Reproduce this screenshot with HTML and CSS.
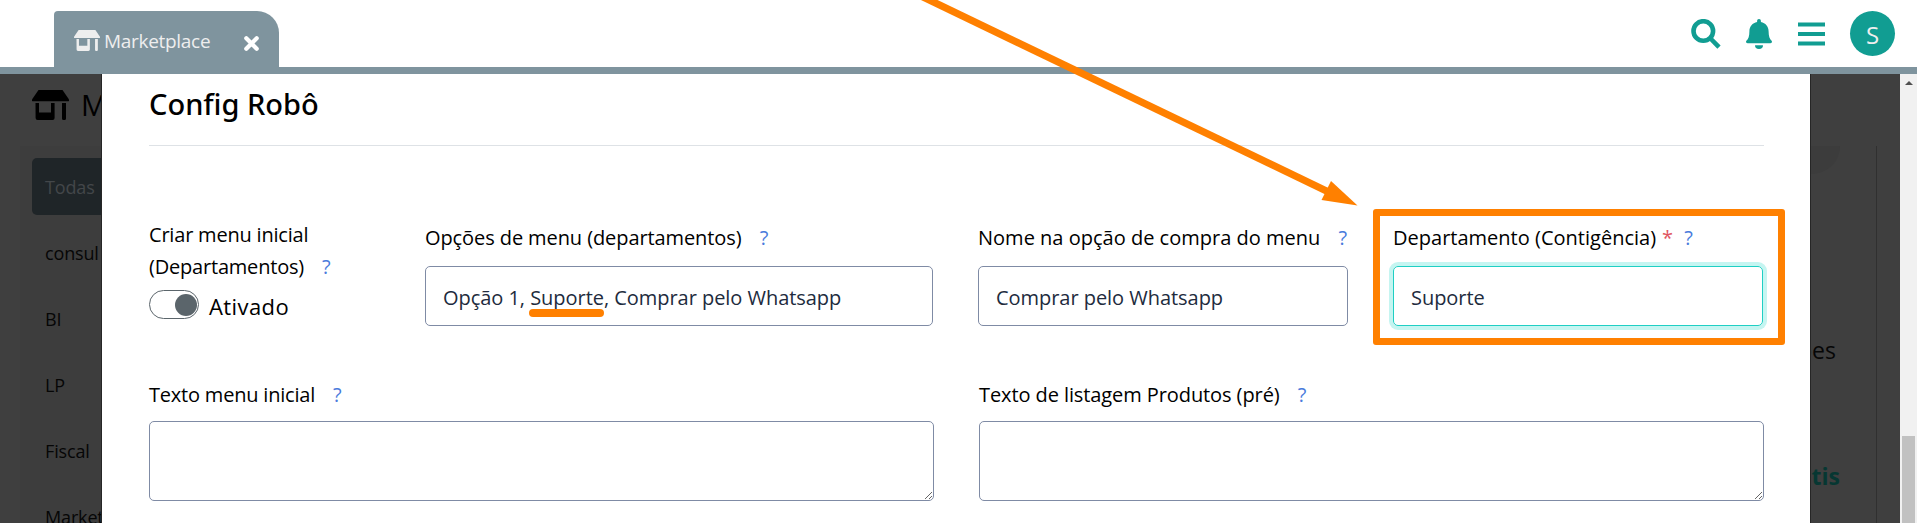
FILE: index.html
```
<!DOCTYPE html>
<html lang="pt-BR">
<head>
<meta charset="utf-8">
<title>Marketplace</title>
<link rel="stylesheet" href="styles.css">
</head>
<body>
<svg width="0" height="0" class="defs" aria-hidden="true">
  <symbol id="store" viewBox="0 0 37 30">
    <path d="M6.5 0h24L37 9.5a1.2 1.2 0 0 1-1 1.800H1A1.200 1.200 0 0 1 0 9.500z"/>
    <path d="M3.500 13H7v9.500h12V13h3.600v15a2 2 0 0 1-2 2h-15a2 2 0 0 1-2-2zM30 13h4v15.500a1.500 1.500 0 0 1-1.500 1.500H31.500a1.500 1.500 0 0 1-1.500-1.500z"/>
  </symbol>
</svg>

<header class="topbar">
  <div class="tab">
    <svg class="tab-icon"><use href="#store"/></svg>
    <span class="tab-label">Marketplace</span>
    <svg class="tab-close" viewBox="0 0 15 15"><path d="M2.300 2.300l10.400 10.400M12.700 2.300L2.300 12.700"/></svg>
  </div>
  <nav class="tools">
    <svg class="tool search" viewBox="0 0 30 30"><circle cx="12.300" cy="12" r="9.800"/><path d="M19.500 19.500L28 28.200"/></svg>
    <svg class="tool bell" viewBox="0 0 26 30"><path d="M13 0c1.200 0 1.900.9 1.900 2v1c4.600.9 7.700 4.500 7.700 9.200 0 5 1 7.600 3 9.500.8.900.3 2.500-1.200 2.500H1.600C.1 24.200-.4 22.600.4 21.700c2-1.900 3-4.500 3-9.500C3.400 7.500 6.500 3.900 11.100 3V2c0-1.100.7-2 1.900-2zM9 26.200h8a4 3.800 0 0 1-8 0z"/></svg>
    <svg class="tool menu" viewBox="0 0 27 24"><path d="M0 2.500h27M0 12h27M0 21.500h27"/></svg>
    <span class="avatar">S</span>
  </nav>
</header>

<main class="page">
  <section class="behind">
    <div class="page-title"><svg class="page-icon"><use href="#store"/></svg><span>M</span></div>
    <div class="panel">
      <ul class="cats">
        <li class="cat active">Todas</li>
        <li class="cat">consul</li>
        <li class="cat">BI</li>
        <li class="cat">LP</li>
        <li class="cat">Fiscal</li>
        <li class="cat">Market</li>
      </ul>
      <div class="card">
        <div class="blob"></div>
        <p class="card-title">ões</p>
        <p class="card-price">átis</p>
      </div>
    </div>
  </section>

  <section class="modal">
    <h2 class="modal-title">Config Robô</h2>
    <div class="fields four">
      <div class="field switch-field">
        <label class="label tight">Criar menu inicial<br>(Departamentos) <a class="help">?</a></label>
        <div class="switch-row"><span class="switch"><span class="knob"></span></span><span class="switch-text">Ativado</span></div>
      </div>
      <div class="field">
        <label class="label">Opções de menu (departamentos) <a class="help">?</a></label>
        <div class="input">Opção 1,&nbsp;<span class="marked">Suporte</span>, Comprar pelo Whatsapp</div>
      </div>
      <div class="field">
        <label class="label spaced">Nome na opção de compra do menu <a class="help">?</a></label>
        <div class="input">Comprar pelo Whatsapp</div>
      </div>
      <div class="field">
        <label class="label spaced">Departamento (Contigência)<span class="req">*</span><a class="help near">?</a></label>
        <div class="input focus">Suporte</div>
      </div>
    </div>
    <div class="fields two">
      <div class="field">
        <label class="label tight">Texto menu inicial <a class="help">?</a></label>
        <textarea class="area"></textarea>
      </div>
      <div class="field">
        <label class="label">Texto de listagem Produtos (pré) <a class="help">?</a></label>
        <textarea class="area"></textarea>
      </div>
    </div>
  </section>

  <div class="scrollbar"><span class="scroll-up"></span><span class="scroll-thumb"></span></div>
</main>

<div class="highlight"></div>
<svg class="arrow" viewBox="0 0 1917 523"><path class="shaft" d="M904.300-12L1327 191.200"/><path d="M1331 181L1357.500 205.500 1321.500 200z"/></svg>
</body>
</html>
```
FILE: styles.css
```
* { box-sizing: border-box; }
body {
  margin: 0;
  height: 523px;
  overflow: hidden;
  position: relative;
  background: #fff;
  font: 20px/32px "Open Sans", "Noto Sans", sans-serif;
  color: #000;
}
.defs { position: absolute; }

/* Top bar */
.topbar {
  height: 74px;
  border-bottom: 7px solid #7f949e;
  padding: 11px 22px 0 54px;
  display: flex;
  justify-content: space-between;
  align-items: flex-start;
}
.tab {
  width: 225px;
  height: 56px;
  padding: 0 20px;
  display: flex;
  align-items: center;
  background: #7f949e;
  border-radius: 4px 22px 0 0;
  color: #eee;
}
.tab-icon { width: 26px; height: 21px; fill: #eee; margin-top: 3px; }
.tab-label { font-size: 19px; letter-spacing: -.3px; margin: 3px 0 0 4px; }
.tab-close { width: 15px; height: 15px; margin: 9px 0 0 auto; stroke: #fff; stroke-width: 4.200; stroke-linecap: round; }
.tools { display: flex; align-items: flex-start; }
.tool { fill: #119d92; stroke: #119d92; stroke-width: 0; margin-top: 8px; }
.search { width: 30px; height: 30px; fill: none; stroke-width: 4.600; margin-right: 25px; }
.bell { width: 26px; height: 30px; margin-right: 26px; }
.menu { width: 27px; height: 24px; stroke-width: 4; margin: 11px 25px 0 0; }
.avatar {
  width: 45px;
  height: 45px;
  border-radius: 50%;
  background: #119d92;
  color: #eee;
  font-size: 24px;
  line-height: 47px;
  text-align: center;
}

/* Dimmed page */
.page { position: relative; height: 449px; background: #3f3f3f; overflow: hidden; }
.behind { padding: 0 40px 0 20px; color: #060606; }
.page-title {
  height: 72px;
  padding: 14px 0 0 12px;
  display: flex;
  gap: 12px;
  font-size: 29px;
  line-height: 34px;
  color: #000;
}
.page-icon { width: 37px; height: 30px; margin-top: 2px; }
.panel { display: flex; justify-content: space-between; height: 377px; background: #3d3d3d; }
.cats { list-style: none; margin: 0; padding: 12px 0 0 12px; width: 300px; }
.cat { height: 57px; margin-bottom: 9px; padding: 1px 13px 0; font-size: 18px; line-height: 57px; letter-spacing: -.15px; }
.active { background: #1f2528; color: #43474a; border-radius: 5px; }
.card { width: 300px; border-right: 1px solid #303030; background: #3f3f3f; padding-right: 36px; text-align: right; }
.blob { width: 60px; height: 28px; margin-left: auto; background: #3c3c3c; border-radius: 0 0 28px 0; }
.card-title { margin: 160px 4px 0 0; font-size: 23px; letter-spacing: 0; }
.card-price { margin: 94px 0 0; font-size: 23px; font-weight: 700; letter-spacing: 0; color: #063732; }

/* Modal */
.modal {
  position: absolute;
  top: 0;
  left: 101px;
  width: 1710px;
  height: 449px;
  padding: 10px 46px 0 47px;
  background: #fff;
  border: solid #262626;
  border-width: 0 1px;
}
.modal-title {
  margin: 0 0 72px;
  height: 62px;
  border-bottom: 1px solid #dee2e6;
  font: 500 29px/40px "Noto Sans", "Open Sans", sans-serif;
}
.fields { display: grid; column-gap: 45px; }
.four { grid-template-columns: 231px 508px 370px 370px; height: 161px; padding-top: 4px; }
.two { grid-template-columns: 785px 785px; }
.switch-field { margin-top: -3px; }
.label { display: block; letter-spacing: -.09px; white-space: nowrap; }
.tight { letter-spacing: -.2px; }
.spaced { letter-spacing: .01px; }
.help { color: #4a7bdc; margin-left: 13px; }
.near { margin-left: 11px; }
.req { color: #e0555f; margin-left: 6px; }
.input {
  display: flex;
  align-items: center;
  height: 60px;
  margin-top: 12px;
  padding: 4px 17px 0;
  border: 1px solid #7f8ba5;
  border-radius: 5px;
  color: #212b3d;
  letter-spacing: -.04px;
  white-space: pre;
}
.focus { border-color: #1fcfc4; box-shadow: 0 0 0 4px #c5f5f1; }
.marked { position: relative; }
.marked::after {
  content: "";
  position: absolute;
  left: -1px;
  top: 27px;
  width: 75px;
  height: 8px;
  border-radius: 4px;
  background: #ff8000;
}
.area {
  display: block;
  width: 785px;
  height: 80px;
  margin-top: 10px;
  border: 1px solid #7f8ba5;
  border-radius: 5px;
  background: #fff;
}
.switch-row { display: flex; gap: 10px; margin-top: 7px; }
.switch { width: 50px; height: 29px; padding: 3px 1px; border: 1px solid #5b656b; border-radius: 15px; display: flex; justify-content: flex-end; }
.knob { width: 22px; height: 22px; border-radius: 50%; background: #5b656b; }
.switch-text { font-size: 22px; letter-spacing: .4px; }

/* Scrollbar */
.scrollbar { position: absolute; top: 0; right: 0; width: 17px; height: 449px; background: #f1f1f1; display: flex; flex-direction: column; align-items: center; justify-content: space-between; padding-top: 7px; }
.scroll-up { border: solid transparent; border-width: 0 4px 4px; border-bottom-color: #505050; }
.scroll-thumb { width: 13px; height: 87px; background: #c1c1c1; }

/* Annotations */
.highlight { position: absolute; left: 1373px; top: 209px; width: 412px; height: 136px; border: 7px solid #ff8000; border-radius: 3px; }
.arrow { position: absolute; left: 0; top: 0; width: 1917px; height: 523px; fill: #ff8000; pointer-events: none; }
.shaft { stroke: #ff8000; stroke-width: 7.200; }
```
